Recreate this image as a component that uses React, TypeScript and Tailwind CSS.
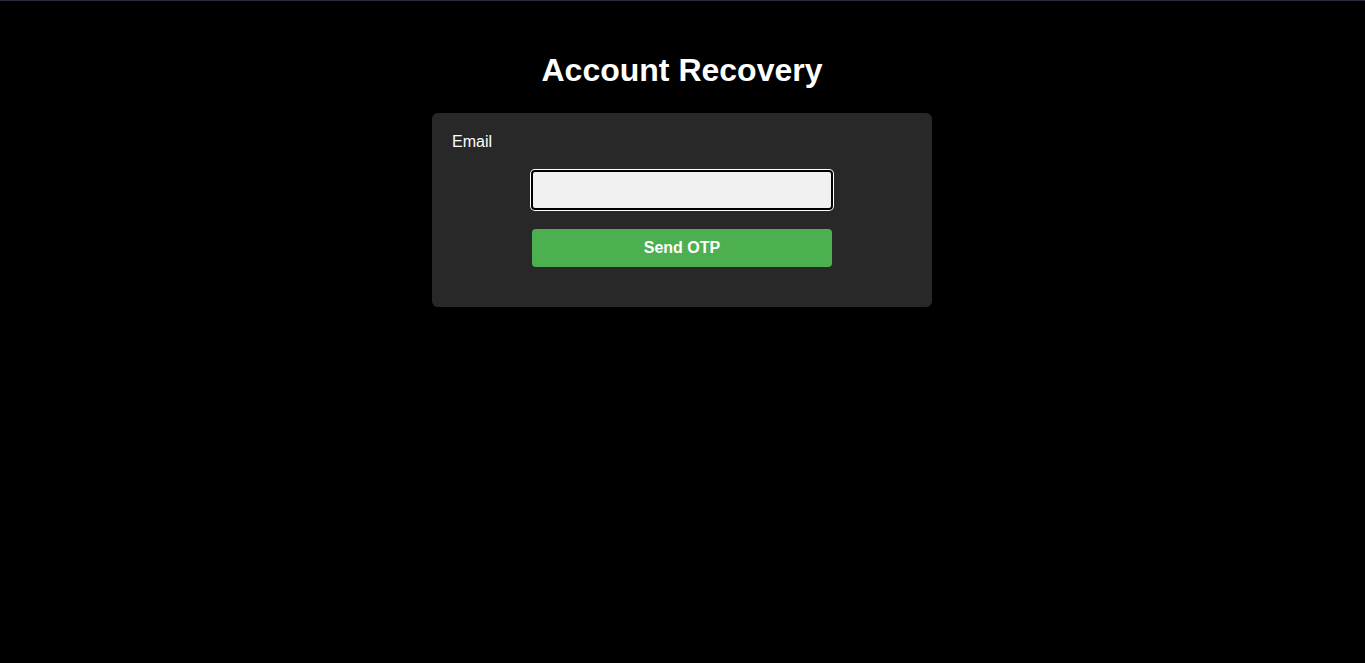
import React from "react";

const App: React.FC = () => {
    return (
        <div className="min-h-screen bg-black border-t border-[#2b2c3b] pr-px font-['Liberation_Sans',Arial,sans-serif] text-white">
            <h1 className="text-center text-[32px] font-bold leading-[37px] pt-[51px]">Account Recovery</h1>
            <div className="mx-auto mt-[24px] w-[500px] rounded-md bg-[#282828] px-5 pt-[20px] pb-10">
                <label className="block text-base leading-[18px]">Email</label>
                <div className="mt-[19px] flex flex-col items-center">
                    <input
                        type="email"
                        className="w-[302px] h-[40px] rounded border-2 border-black bg-[#f1f1f1] px-2 text-black shadow-[0_0_0_1px_#ffffff] outline-none"
                    />
                    <button className="mt-[19px] w-[300px] h-[38px] rounded bg-[#4caf50] text-base font-bold text-white">
                        Send OTP
                    </button>
                </div>
            </div>
        </div>
    );
};

export default App;
